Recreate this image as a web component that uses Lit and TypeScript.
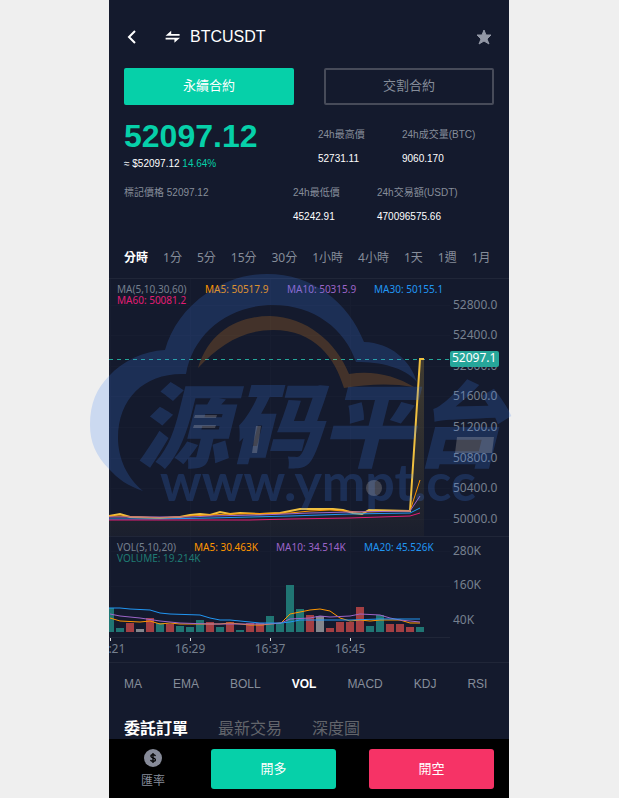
import { LitElement, html, svg, css } from "lit";
import { customElement, property, state } from "lit/decorators.js";

type Point = [number, number];
const toPoints = (pts: Point[]) => pts.map((p) => p.join(",")).join(" ");

const PRICE_LINE: Point[] = [
  [0, 516], [11, 514], [21, 517], [51, 518], [71, 517], [81, 515], [91, 514], [101, 515], [111, 512],
  [121, 514], [131, 513], [151, 514], [171, 513], [181, 511], [191, 509], [224, 509], [234, 510],
  [244, 513], [253, 514], [260, 510], [301, 511], [311, 359], [315, 359],
];
const PRICE_MA: { color: string; points: Point[] }[] = [
  { color: "#ff9600", points: [[0, 516], [11, 516], [51, 518], [81, 516], [121, 514], [181, 513], [201, 511], [221, 510], [251, 512], [301, 511], [311, 480]] },
  { color: "#9d65c9", points: [[0, 517], [51, 517], [81, 517], [101, 516], [151, 515], [201, 513], [241, 512], [301, 511], [311, 496]] },
  { color: "#2196f3", points: [[0, 519], [51, 519], [101, 518], [141, 517], [181, 516], [241, 514], [301, 513], [311, 508]] },
  { color: "#e11d74", points: [[0, 520], [141, 520], [181, 519], [241, 518], [301, 516], [311, 513]] },
];
const VOLUME_MA: { color: string; points: Point[] }[] = [
  { color: "#ff9600", points: [[1, 618], [11, 621], [31, 622], [41, 621], [51, 624], [61, 623], [71, 624], [111, 624], [121, 623], [141, 625], [153, 625], [161, 624], [172, 623], [181, 614], [191, 612], [201, 610], [211, 609], [221, 611], [231, 618], [241, 621], [251, 620], [261, 621], [271, 620], [291, 620], [301, 623], [311, 623]] },
  { color: "#9d65c9", points: [[1, 614], [11, 616], [31, 618], [51, 621], [71, 623], [101, 624], [161, 624], [172, 623], [181, 619], [201, 618], [211, 616], [221, 617], [241, 616], [251, 614], [271, 615], [281, 618], [291, 620], [301, 621], [311, 622]] },
  { color: "#2196f3", points: [[0, 608], [11, 608], [21, 609], [41, 610], [51, 613], [61, 614], [91, 615], [101, 618], [111, 620], [121, 620], [141, 622], [151, 623], [172, 623], [181, 622], [191, 620], [241, 620], [271, 619], [311, 619]] },
];
const BAR_COLORS: Record<string, string> = { u: "#26a69a", d: "#ef5350", f: "#c0c0c0" };
const BARS = "u:24 u:4 d:9 f:3 d:14 u:9 d:8 u:6 u:5 u:12 d:10 u:5 d:10 u:2 d:9 d:9 u:16 u:9 u:47 u:23 d:17 f:16 d:4 d:10 d:10 d:25 u:6 u:17 d:8 d:8 d:5 u:5"
  .split(" ")
  .map((entry) => {
    const [kind, height] = entry.split(":");
    return { color: BAR_COLORS[kind], height: Number(height) };
  });
const PRICE_TICKS = [305, 335, 366, 396, 427, 458, 488, 519];
const TIME_TICKS = [
  { x: 1, label: "16:21" },
  { x: 81, label: "16:29" },
  { x: 161, label: "16:37" },
  { x: 241, label: "16:45" },
];

@customElement("market-chart")
export class MarketChart extends LitElement {
  static styles = css`
    :host { display: block; }
    .chart { display: block; width: 100%; height: auto; font-family: "Noto Sans", "Open Sans", sans-serif; }
    .rule { stroke: #202638; }
    .grid { stroke: #171d30; }
    .line { fill: none; stroke-width: 1; }
    .price { fill: none; stroke: #f0c040; stroke-width: 2; }
    .last { stroke: #26a69a; stroke-dasharray: 4 4; }
    .tick { stroke: #dddddd; }
    .legend { font-size: 10px; }
    .axis { font-size: 12px; fill: #76808f; }
    .center { text-anchor: middle; }
    .badge { fill: #26a69a; }
    .badge-text { font-size: 12px; fill: #ffffff; }
  `;

  render() {
    return html`
      <svg class="chart" viewBox="0 278 400 385" role="img" aria-label="BTCUSDT">
        <defs>
          <linearGradient id="fade" x1="0" y1="0" x2="0" y2="1">
            <stop offset="0" stop-color="#f0c040" stop-opacity="0.2" />
            <stop offset="1" stop-color="#f0c040" stop-opacity="0.03" />
          </linearGradient>
        </defs>
        ${PRICE_TICKS.map((y) => svg`<line class="grid" x1="0" x2="341" y1=${y + 0.5} y2=${y + 0.5} />`)}
        ${[551, 586].map((y) => svg`<line class="grid" x1="0" x2="341" y1=${y + 0.5} y2=${y + 0.5} />`)}
        ${TIME_TICKS.map((t) => svg`<line class="grid" x1=${t.x + 0.5} x2=${t.x + 0.5} y1="279" y2="637" />`)}
        <path class="rule" d="M0 278.5H400M0 536.5H400M0 637.5H341M0 662.5H400" />

        <polygon fill="url(#fade)" points="0,536 ${toPoints(PRICE_LINE)} 315,536" />
        <line class="last" x1="0" x2="341" y1="359.5" y2="359.5" />
        <polyline class="price" points=${toPoints(PRICE_LINE)} />
        ${PRICE_MA.map((m) => svg`<polyline class="line" stroke=${m.color} points=${toPoints(m.points)} />`)}

        ${BARS.map((b, i) => svg`<rect x=${i * 10 - 3} y=${632 - b.height} width="8" height=${b.height} fill=${b.color} opacity="0.65" />`)}
        ${VOLUME_MA.map((m) => svg`<polyline class="line" stroke=${m.color} points=${toPoints(m.points)} />`)}

        <g class="legend">
          <text x="8" y="293" fill="#76808f">MA(5,10,30,60)</text>
          <text x="96" y="293" fill="#ff9600">MA5: 50517.9</text>
          <text x="178" y="293" fill="#9d65c9">MA10: 50315.9</text>
          <text x="265" y="293" fill="#2196f3">MA30: 50155.1</text>
          <text x="8" y="304" fill="#e11d74">MA60: 50081.2</text>
          <text x="8" y="551" fill="#76808f">VOL(5,10,20)</text>
          <text x="85" y="551" fill="#ff9600">MA5: 30.463K</text>
          <text x="167" y="551" fill="#9d65c9">MA10: 34.514K</text>
          <text x="255" y="551" fill="#2196f3">MA20: 45.526K</text>
          <text x="8" y="562" fill="#1f7a73">VOLUME: 19.214K</text>
        </g>
        <g class="axis">
          ${PRICE_TICKS.map((y, i) => svg`<text x="344" y=${y + 4}>${(52800 - i * 400).toFixed(1)}</text>`)}
          <text x="344" y="555">280K</text>
          <text x="344" y="589">160K</text>
          <text x="344" y="624">40K</text>
        </g>
        <g class="axis center">
          ${TIME_TICKS.map((t) => svg`<line class="tick" x1=${t.x + 0.5} x2=${t.x + 0.5} y1="638" y2="641" /><text x=${t.x} y="653">${t.label}</text>`)}
        </g>
        <rect class="badge" x="341" y="351" width="49" height="16" rx="2" />
        <text class="badge-text" x="343" y="362">52097.1</text>
      </svg>
    `;
  }
}

@customElement("cloud-mark")
export class CloudMark extends LitElement {
  static styles = css`
    :host { display: block; }
    .mark { display: block; width: 100%; height: auto; overflow: visible; }
    .blue { fill: #4083f6; }
    .orange { fill: #fe971f; }
    .peach { fill: #fff5ec; }
    .soft { opacity: 0.2; }
    .name { font: italic 900 92px "Noto Sans CJK SC", sans-serif; }
    .site { font: 700 52px Lato, sans-serif; }
  `;

  render() {
    return html`
      <svg class="mark" viewBox="90 274 428 240" aria-hidden="true">
        <g class="soft blue">
          <path d="M143 491C128 486 118 479 109 469C96 456 90 442 90 425C90 403 97 388 109 376C123 361 143 351 165 350C171 328 185 308 207 293C225 281 244 274 267 274C313 274 348 302 364 342C391 343 410 360 417 382C404 367 381 362 356 362C345 329 314 305 273 305C229 305 193 333 186 374C146 372 118 397 118 438C118 458 127 478 143 491Z" />
          <text class="name" x="137" y="460">源码平台</text>
          <text class="site" x="160" y="501">www.ympt.cc</text>
        </g>
        <path class="soft orange" d="M198 368C209 331 239 316 270 316C307 317 336 342 349 374C373 370 396 376 414 387C391 383 368 384 344 388C335 358 315 330 273 330C243 330 219 345 198 368Z" />
        <g class="soft peach">
          <path d="M195 415H217L216 418H194ZM194 425H216L215 428H193ZM256 426H261L257 453H252ZM457 437H494L492 453H455Z" />
          <circle cx="374" cy="488" r="8" />
        </g>
      </svg>
    `;
  }
}

@customElement("tab-row")
export class TabRow extends LitElement {
  @property({ attribute: false }) items: string[] = [];
  @state() active = "";
  @property() initial = "";

  static styles = css`
    :host { display: block; }
    .tabs { display: flex; gap: var(--tab-gap, 30px); height: 100%; align-items: center; }
    .tab {
      border: 0; padding: 0; background: none; white-space: nowrap; cursor: pointer;
      font: inherit; color: inherit;
    }
    .tab.on { color: #ffffff; font-weight: 700; }
  `;

  render() {
    const current = this.active || this.initial;
    return html`<nav class="tabs">
      ${this.items.map(
        (item) => html`<button
          class="tab ${item === current ? "on" : ""}"
          aria-pressed=${item === current}
          @click=${() => (this.active = item)}
        >${item}</button>`
      )}
    </nav>`;
  }
}

@customElement("app-root")
export class AppRoot extends LitElement {
  static styles = css`
    :host {
      display: block; min-height: 100vh; background: #efefef; overflow-x: hidden;
      font-family: "Liberation Sans", "Noto Sans CJK TC", sans-serif;
    }
    * { box-sizing: border-box; }
    .panel {
      display: flex; flex-direction: column; max-width: 400px; min-height: 100vh;
      margin-left: max(0px, round(down, 50% - 200px, 1px)); background: #141a2d; color: #ffffff;
    }
    .top { display: flex; align-items: center; height: 68px; padding: 6px 15px 0; }
    .icon-button { display: flex; border: 0; padding: 0; background: none; cursor: pointer; }
    .back { width: 40px; }
    .pair { margin: 0 auto 0 8px; font-size: 16px; line-height: 20px; font-weight: 400; }
    .kinds { display: grid; grid-template-columns: 1fr 1fr; gap: 30px; padding: 0 15px; }
    .kind {
      height: 37px; border: 2px solid #474b59; border-radius: 2px; background: none; color: #868d9a;
      padding: 0 0 4px;
      font: 13px "Liberation Sans", "Noto Sans CJK TC", sans-serif; cursor: pointer;
    }
    .kind.on { border-color: #06d0a9; background: #06d0a9; color: #ffffff; }
    .quote { display: grid; padding: 15px 15px 0; }
    .quote-row { display: grid; font-size: 10px; line-height: 14px; }
    .first { grid-template-columns: 194px 84px 1fr; height: 66px; }
    .second { grid-template-columns: 169px 84px 1fr; height: 49px; }
    .price { color: #06d0a9; font-size: 32px; line-height: 32px; font-weight: 700; }
    .approx { padding-top: 5px; }
    .change { color: #06d0a9; }
    .stat { margin: 0; white-space: nowrap; }
    .first .stat { padding-top: 8px; }
    .label { color: #868d9a; }
    .value { margin: 10px 0 0; }
    .intervals {
      height: 43px; padding-left: 15px; color: #868d9a; --tab-gap: 15px;
      font: 12px "Noto Sans", "Noto Sans CJK TC", sans-serif;
    }
    .chart-area { position: relative; }
    .watermark { position: absolute; left: -19px; top: -4px; width: 428px; pointer-events: none; }
    .indicators { height: 42px; padding-left: 15px; color: #868d9a; font-size: 12px; --tab-gap: 31px; }
    .orders {
      height: 34px; padding: 13px 0 0 15px; color: #62656b; overflow: hidden;
      font-size: 16px; line-height: 20px;
    }
    .actions {
      position: sticky; bottom: 0; display: flex; justify-content: space-between; margin-top: auto;
      padding: 10px 15px 9px; background: #000000;
    }
    .rate {
      display: flex; flex-direction: column; align-items: center; gap: 7px; width: 58px;
      color: #868d9a; font-size: 12px; line-height: 15px; text-decoration: none;
    }
    .trade { display: flex; gap: 33px; }
    .side {
      width: 125px; height: 40px; border: 0; border-radius: 3px; color: #ffffff; cursor: pointer;
      padding: 0 0 4px;
      font: 13px "Liberation Sans", "Noto Sans CJK TC", sans-serif;
    }
    .long { background: #06d0a9; }
    .short { background: #f63366; }
  `;

  private stat(label: string, value: string) {
    return html`<dl class="stat"><dt class="label">${label}</dt><dd class="value">${value}</dd></dl>`;
  }

  render() {
    return html`
      <div class="panel">
        <header class="top">
          <button class="icon-button back" aria-label="返回">
            <svg width="16" height="16" viewBox="0 0 16 16"><path d="M11 2L5 8L11 14" fill="none" stroke="#fff" stroke-width="2" /></svg>
          </button>
          <button class="icon-button" aria-label="切換">
            <svg width="18" height="16" viewBox="0 0 18 16">
              <path d="M1.6 6.8L7.2 1.8V4.9H15.6V6.8ZM1.6 8.7H16L10.4 13.7V10.6H1.6Z" fill="#fff" />
            </svg>
          </button>
          <h1 class="pair">BTCUSDT</h1>
          <button class="icon-button" aria-label="收藏">
            <svg width="18" height="16" viewBox="0 0 18 16">
              <path d="M8 1L10 6L15 6L11 10L13 15L8 12L3 15L5 10L1 6L6 6Z" fill="#9297a5" stroke="#9297a5" stroke-linejoin="round" />
            </svg>
          </button>
        </header>

        <div class="kinds">
          <button class="kind on">永續合約</button>
          <button class="kind">交割合約</button>
        </div>

        <section class="quote">
          <div class="quote-row first">
            <div>
              <div class="price">52097.12</div>
              <div class="approx">≈ $52097.12 <span class="change">14.64%</span></div>
            </div>
            ${this.stat("24h最高價", "52731.11")} ${this.stat("24h成交量(BTC)", "9060.170")}
          </div>
          <div class="quote-row second">
            <div class="label">標記價格 52097.12</div>
            ${this.stat("24h最低價", "45242.91")} ${this.stat("24h交易額(USDT)", "470096575.66")}
          </div>
        </section>

        <tab-row class="intervals" initial="分時"
          .items=${["分時", "1分", "5分", "15分", "30分", "1小時", "4小時", "1天", "1週", "1月"]}></tab-row>

        <div class="chart-area">
          <market-chart></market-chart>
          <cloud-mark class="watermark"></cloud-mark>
        </div>

        <tab-row class="indicators" initial="VOL"
          .items=${["MA", "EMA", "BOLL", "VOL", "MACD", "KDJ", "RSI"]}></tab-row>
        <tab-row class="orders" initial="委託訂單" .items=${["委託訂單", "最新交易", "深度圖"]}></tab-row>

        <footer class="actions">
          <a class="rate" href="#rate">
            <svg width="18" height="18" viewBox="0 0 18 18">
              <circle cx="9" cy="9" r="9" fill="#868a98" />
              <path d="M9 4V14M11.4 7.2C11 5.2 6.9 5.2 6.9 7.3C6.9 9.4 11.4 8.5 11.4 10.8C11.4 12.9 7 12.9 6.6 10.8" fill="none" stroke="#000" stroke-width="1.3" />
            </svg>
            <span>匯率</span>
          </a>
          <div class="trade">
            <button class="side long">開多</button>
            <button class="side short">開空</button>
          </div>
        </footer>
      </div>
    `;
  }
}
